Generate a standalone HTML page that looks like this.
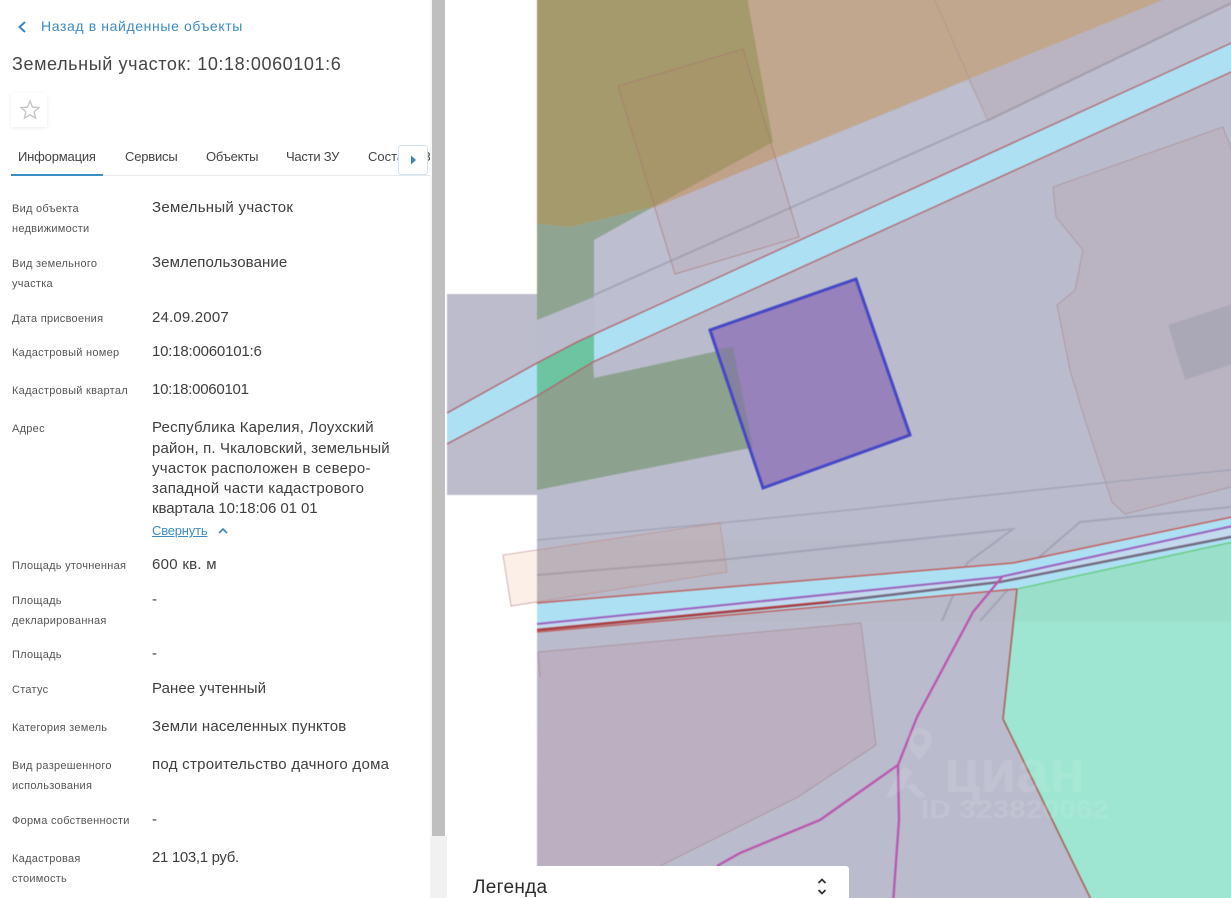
<!DOCTYPE html>
<html lang="ru"><head><meta charset="utf-8"><title>Земельный участок</title>
<style>
html,body{margin:0;padding:0;background:#fff;width:1231px;height:898px;overflow:hidden}
#w{position:absolute;left:0;top:0;width:1231px;height:898px;overflow:hidden;contain:paint;font-family:"Liberation Sans","DejaVu Sans",sans-serif}
.t{position:absolute;white-space:nowrap;line-height:20px;height:20px}
.l{font-size:11px;color:#555;left:12px;letter-spacing:.27px}
.v{font-size:15px;color:#3f3f3f;left:152px;letter-spacing:.28px}
.tab{font-size:13px;color:#444;top:147px}
svg{position:absolute;left:0;top:0}
</style></head><body><div id="w">
<svg width="1271" height="938" viewBox="-20 -20 1271 938" style="left:-20px;top:-20px;filter:blur(.45px)">
<rect x="447" y="294" width="90" height="201" fill="#bcbccd"/>
<rect x="537" y="-20" width="714" height="938" fill="#babccd"/>
<polygon points="594,240 653,207 840,133 1163,0 1251,-20 1251,34 577,342 594,334" fill="#bdbed0"/>
<polygon points="744,-20 1212,-20 653,208" fill="#c1a78e"/>
<polygon points="968,80 1163,0 1212,-20 1251,-20 1251,-6 988,121" fill="#bab4c2"/>
<polygon points="537,-20 744,-20 773,142 653,207 570,227 537,224" fill="#a59a6b"/>
<polygon points="537,224 570,227 653,207 594,240 594,297 537,320" fill="#8fa592"/>
<polyline points="594,295 988,120 1231,3 1251,-6" fill="none" stroke="#9c9cb0" stroke-opacity=".75" stroke-width="2"/>
<polygon points="537,396 593,362 594,378 713,352 735,347 750,448 537,490" fill="#8ca28e"/>
<polygon points="447,413 537,363 577,342 1251,34 1251,63 593,362 537,396 447,444" fill="#aee0f3"/>
<polygon points="537,363 577,342 594,334 594,362 537,396" fill="#6cc4a0"/>
<polyline points="447,413 537,363 577,342 1251,34" fill="none" stroke="#b0656f" stroke-width="1.3"/>
<polyline points="447,444 537,396 593,362 1251,63" fill="none" stroke="#b0656f" stroke-width="1.3"/>
<polygon points="618,86 743,49 799,237 675,274" fill="#b46a5a" fill-opacity=".07" stroke="#a87670" stroke-opacity=".8" stroke-width=".8"/>
<polyline points="926,-20 988,121 1251,-6" fill="none" stroke="#a8908c" stroke-opacity=".7" stroke-width=".8"/>
<polygon points="1053,187 1223,127 1251,200 1251,482 1125,514 1112,502 1085,420 1070,370 1057,305 1075,290 1083,250 1056,217" fill="#bab4c2" stroke="#a8868c" stroke-opacity=".75" stroke-width=".8"/>
<polygon points="1168,325 1251,298 1251,358 1185,380" fill="#aaa8b7"/>
<polygon points="710,330 856,279 910,435 763,488" fill="#9782bb"/>
<polygon points="719,349 733,347 753,447 749,449" fill="#85829f"/>
<polygon points="710,330 856,279 910,435 763,488" fill="none" stroke="#4547c6" stroke-width="3"/>
<polyline points="537,540 720,523 840,511 1130,480 1251,468" fill="none" stroke="#a4a5b8" stroke-width="1.6"/>
<polyline points="537,575 720,560 840,547 1013,529 967,563 942,621" fill="none" stroke="#a4a5b8" stroke-width="2"/>
<polyline points="1251,505 1080,522 1030,565 980,621" fill="none" stroke="#a4a5b8" stroke-width="2"/>
<rect x="537" y="540" width="714" height="82" fill="#555" fill-opacity=".02"/>
<polygon points="503,555 720,523 727,572 511,606" fill="#e07a40" fill-opacity=".12" stroke="#bd8f8f" stroke-opacity=".85" stroke-width=".8"/>
<polygon points="537,603 1013,563 1251,513 1251,538 1017,589 830,607 537,631" fill="#aee0f3"/>
<polygon points="537,624 1000,577 1251,522 1251,533 1000,582 830,602 537,630" fill="#c3d9ee"/>
<polyline points="537,603 1013,563 1251,513" fill="none" stroke="#c0605f" stroke-width="1.5"/>
<polyline points="537,624 1000,577 1251,522" fill="none" stroke="#9a62bd" stroke-width="2"/>
<polyline points="537,632 830,606 1017,589" fill="none" stroke="#c0605f" stroke-width="1.5"/>
<polyline points="830,602 1000,582 1251,533" fill="none" stroke="#736a80" stroke-width="2.4"/>
<polyline points="537,630 830,602" fill="none" stroke="#a83f42" stroke-width="2.6"/>
<polygon points="1017,589 1251,538 1251,918 1100,918 1003,719" fill="#9ee6d1"/>
<polygon points="1017,589 1251,538 1251,621 1014,621" fill="#9adfc9"/>
<polyline points="1017,589 1251,538" fill="none" stroke="#65cb83" stroke-width="1.4"/>
<polyline points="1017,589 1003,719 1100,918" fill="none" stroke="#a5655d" stroke-width="1.6"/>
<polygon points="538,652 861,623 876,745 798,797 660,866 537,866" fill="#bab0c1"/>
<polyline points="540,677 538,652 861,623 876,745 798,797 660,866" fill="none" stroke="#aa8a94" stroke-opacity=".8" stroke-width=".9"/>
<polyline points="1002,577 973,612 917,717 898,765 820,820 740,853 717,866" fill="none" stroke="#b957ad" stroke-width="2.3"/>
<polyline points="898,765 899,820 892,918" fill="none" stroke="#b957ad" stroke-width="2.3"/>
<g fill="#fff" fill-opacity=".1">
<path d="M919 760c-8-8-11-16-11-20a12 12 0 0 1 24 0c0 6-6 13-13 20zm0-26a6 6 0 1 0 0 12 6 6 0 0 0 0-12z" fill-rule="evenodd"/>
<path d="M893 783l11-17 8 6-8 14 10-2 13 13-9 0-12-11-14 11h-6z" />
<text x="944" y="792" font-family="Liberation Sans,sans-serif" font-size="60" font-weight="700" textLength="141" lengthAdjust="spacingAndGlyphs">циан</text>
<text x="921" y="818" font-family="Liberation Sans,sans-serif" font-size="25" font-weight="700" textLength="188" lengthAdjust="spacingAndGlyphs">ID 323820062</text>
</g>
</svg>

<div style="position:absolute;left:430px;top:836px;width:17px;height:62px;background:#f1f1f1"></div>
<div style="position:absolute;left:430px;top:0;width:2px;height:836px;background:#f8f8f8"></div>
<div style="position:absolute;left:432px;top:0;width:13px;height:836px;background:#bfbfbf"></div>

<svg width="40" height="40" style="left:10px;top:10px"><polyline points="15,12 9.5,17 15,22" fill="none" stroke="#3d86bd" stroke-width="2"/></svg>
<div class="t" style="left:41px;top:16px;font-size:14px;color:#3d8bc1;letter-spacing:.62px">Назад в найденные объекты</div>
<div class="t" style="left:12px;top:54px;font-size:18px;color:#454545;letter-spacing:.6px">Земельный участок: 10:18:0060101:6</div>

<div style="position:absolute;left:11px;top:93px;width:36px;height:34px;background:#fff;box-shadow:0 1px 4px rgba(0,0,0,.08)"></div>
<svg width="24" height="24" style="left:18px;top:98px"><polygon points="12,3 14.6,9.2 21,9.6 16.1,13.8 17.6,20.2 12,16.8 6.4,20.2 7.9,13.8 3,9.6 9.4,9.2" fill="none" stroke="#c4c4c4" stroke-width="1.3"/></svg>

<div class="t tab" style="left:18px;letter-spacing:-.18px">Информация</div>
<div class="t tab" style="left:125px;letter-spacing:-.2px">Сервисы</div>
<div class="t tab" style="left:206px;letter-spacing:-.2px">Объекты</div>
<div class="t tab" style="left:286px;letter-spacing:-.25px">Части ЗУ</div>
<div style="position:absolute;left:368px;top:147px;width:62px;height:20px;overflow:hidden;font-size:13px;line-height:20px;color:#444;white-space:nowrap">Состав<span style="position:absolute;left:55px;top:0">З</span></div>
<div style="position:absolute;left:11px;top:175px;width:419px;height:1px;background:#e6ebef"></div>
<div style="position:absolute;left:11px;top:174px;width:92px;height:1.5px;background:#3b8ec2"></div>
<div style="position:absolute;left:398px;top:145px;width:28px;height:28px;background:#fff;border:1px solid #d3e2ef;border-radius:3px"></div>
<svg width="10" height="12" style="left:408px;top:154px"><polygon points="3,1.5 8,6 3,10.5" fill="#3d86bd"/></svg>

<div class="t l" style="top:199px">Вид объекта</div><div class="t l" style="top:219px">недвижимости</div>
<div class="t v" style="top:198px">Земельный участок</div>
<div class="t l" style="top:254px">Вид земельного</div><div class="t l" style="top:274px">участка</div>
<div class="t v" style="top:253px;letter-spacing:.1px">Землепользование</div>
<div class="t l" style="top:309px">Дата присвоения</div>
<div class="t v" style="top:308px;letter-spacing:.18px">24.09.2007</div>
<div class="t l" style="top:343px">Кадастровый номер</div>
<div class="t v" style="top:342px;letter-spacing:-.2px">10:18:0060101:6</div>
<div class="t l" style="top:381px">Кадастровый квартал</div>
<div class="t v" style="top:380px;letter-spacing:-.26px">10:18:0060101</div>
<div class="t l" style="top:419px">Адрес</div>
<div class="t v" style="top:418px;letter-spacing:.21px">Республика Карелия, Лоухский</div>
<div class="t v" style="top:439px;letter-spacing:.15px">район, п. Чкаловский, земельный</div>
<div class="t v" style="top:459px">участок расположен в северо-</div>
<div class="t v" style="top:479px;letter-spacing:.24px">западной части кадастрового</div>
<div class="t v" style="top:499px;letter-spacing:-.07px">квартала 10:18:06 01 01</div>
<div class="t" style="left:152px;top:521px;font-size:13px;color:#3d8bc1;text-decoration:underline;letter-spacing:-.2px">Свернуть</div>
<svg width="14" height="10" style="left:216px;top:526px"><polyline points="3,7 7,3 11,7" fill="none" stroke="#3d86bd" stroke-width="1.6"/></svg>
<div class="t l" style="top:556px">Площадь уточненная</div>
<div class="t v" style="top:555px">600 кв. м</div>
<div class="t l" style="top:591px">Площадь</div><div class="t l" style="top:611px">декларированная</div>
<div class="t v" style="top:590px">-</div>
<div class="t l" style="top:645px">Площадь</div>
<div class="t v" style="top:644px">-</div>
<div class="t l" style="top:680px">Статус</div>
<div class="t v" style="top:679px;letter-spacing:.07px">Ранее учтенный</div>
<div class="t l" style="top:718px">Категория земель</div>
<div class="t v" style="top:717px;letter-spacing:.15px">Земли населенных пунктов</div>
<div class="t l" style="top:756px">Вид разрешенного</div><div class="t l" style="top:776px">использования</div>
<div class="t v" style="top:755px">под строительство дачного дома</div>
<div class="t l" style="top:811px">Форма собственности</div>
<div class="t v" style="top:810px">-</div>
<div class="t l" style="top:849px">Кадастровая</div><div class="t l" style="top:869px">стоимость</div>
<div class="t v" style="top:848px;letter-spacing:-.33px">21 103,1 руб.</div>

<div style="position:absolute;left:458px;top:866px;width:391px;height:32px;background:#fff;border-radius:3px 3px 0 0"></div>
<div class="t" style="left:473px;top:878px;font-size:19px;color:#2b2b2b;letter-spacing:.3px">Легенда</div>
<svg width="14" height="22" style="left:815px;top:876px"><polyline points="3.5,7 7,3.5 10.5,7" fill="none" stroke="#333" stroke-width="1.8"/><polyline points="3.5,14 7,17.5 10.5,14" fill="none" stroke="#333" stroke-width="1.8"/></svg>
</div></body></html>
